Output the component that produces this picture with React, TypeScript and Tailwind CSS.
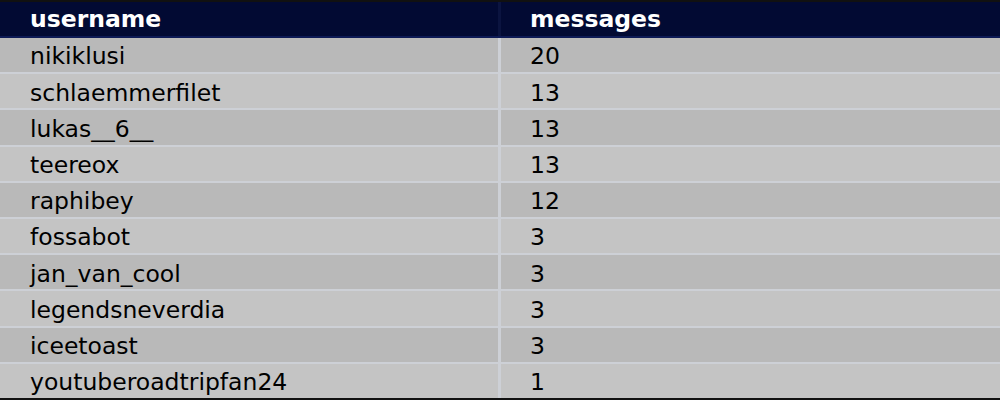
const rows: [string, number][] = [
  ["nikiklusi", 20],
  ["schlaemmerfilet", 13],
  ["lukas__6__", 13],
  ["teereox", 13],
  ["raphibey", 12],
  ["fossabot", 3],
  ["jan_van_cool", 3],
  ["legendsneverdia", 3],
  ["iceetoast", 3],
  ["youtuberoadtripfan24", 1],
];

export default function App() {
  return (
    <div className="h-[400px] w-[1000px] overflow-hidden bg-[#cdd0d6] font-['DejaVu_Sans',sans-serif] text-[23.5px]">
      <div className="h-[398px] border-t-2 border-[#111]">
        <div className="grid grid-cols-[498px_1fr] gap-x-[3px] bg-[#0b1440]">
          <div className="flex h-[34px] items-center bg-[#020a33] pl-[30px] pt-[2px] font-bold text-white">username</div>
          <div className="flex h-[34px] items-center bg-[#020a33] pl-[29px] pt-[2px] font-bold text-white">messages</div>
        </div>
        <div className="h-[2px] bg-[#0d1a55]" />
        <div className="grid grid-cols-[498px_1fr] gap-x-[3px] gap-y-[2px]">
          {rows.map(([name, count], i) => {
            const bg = i % 2 === 0 ? "bg-[#b9b9b9]" : "bg-[#c4c4c4]";
            return [
              <div key={name} className={`flex h-[34.2px] items-center pl-[30px] pt-[4px] text-black ${bg}`}>
                {name}
              </div>,
              <div key={name + "-c"} className={`flex h-[34.2px] items-center pl-[29px] pt-[4px] text-black ${bg}`}>
                {count}
              </div>,
            ];
          })}
        </div>
      </div>
      <div className="h-[2px] bg-[#111]" />
    </div>
  );
}
